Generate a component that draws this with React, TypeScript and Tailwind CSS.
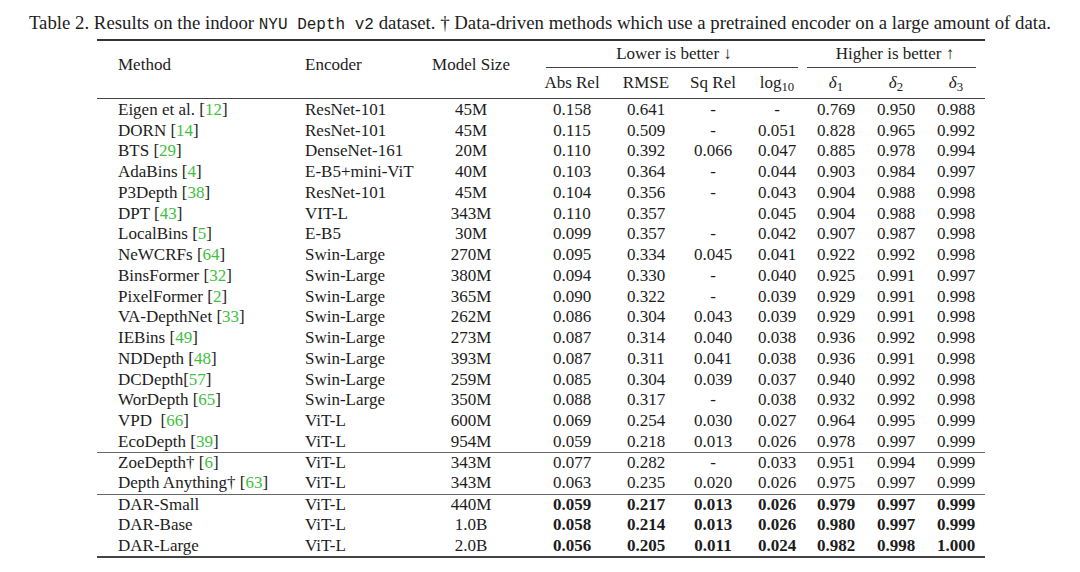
import React from "react";

type Row = {
  m: string;
  c?: string;
  enc: string;
  size: string;
  vals: string[];
  bold?: boolean;
};

const groups: Row[][] = [
  [
    { m: "Eigen et al. ", c: "12", enc: "ResNet-101", size: "45M", vals: ["0.158", "0.641", "-", "-", "0.769", "0.950", "0.988"] },
    { m: "DORN ", c: "14", enc: "ResNet-101", size: "45M", vals: ["0.115", "0.509", "-", "0.051", "0.828", "0.965", "0.992"] },
    { m: "BTS ", c: "29", enc: "DenseNet-161", size: "20M", vals: ["0.110", "0.392", "0.066", "0.047", "0.885", "0.978", "0.994"] },
    { m: "AdaBins ", c: "4", enc: "E-B5+mini-ViT", size: "40M", vals: ["0.103", "0.364", "-", "0.044", "0.903", "0.984", "0.997"] },
    { m: "P3Depth ", c: "38", enc: "ResNet-101", size: "45M", vals: ["0.104", "0.356", "-", "0.043", "0.904", "0.988", "0.998"] },
    { m: "DPT ", c: "43", enc: "VIT-L", size: "343M", vals: ["0.110", "0.357", "", "0.045", "0.904", "0.988", "0.998"] },
    { m: "LocalBins ", c: "5", enc: "E-B5", size: "30M", vals: ["0.099", "0.357", "-", "0.042", "0.907", "0.987", "0.998"] },
    { m: "NeWCRFs ", c: "64", enc: "Swin-Large", size: "270M", vals: ["0.095", "0.334", "0.045", "0.041", "0.922", "0.992", "0.998"] },
    { m: "BinsFormer ", c: "32", enc: "Swin-Large", size: "380M", vals: ["0.094", "0.330", "-", "0.040", "0.925", "0.991", "0.997"] },
    { m: "PixelFormer ", c: "2", enc: "Swin-Large", size: "365M", vals: ["0.090", "0.322", "-", "0.039", "0.929", "0.991", "0.998"] },
    { m: "VA-DepthNet ", c: "33", enc: "Swin-Large", size: "262M", vals: ["0.086", "0.304", "0.043", "0.039", "0.929", "0.991", "0.998"] },
    { m: "IEBins ", c: "49", enc: "Swin-Large", size: "273M", vals: ["0.087", "0.314", "0.040", "0.038", "0.936", "0.992", "0.998"] },
    { m: "NDDepth ", c: "48", enc: "Swin-Large", size: "393M", vals: ["0.087", "0.311", "0.041", "0.038", "0.936", "0.991", "0.998"] },
    { m: "DCDepth", c: "57", enc: "Swin-Large", size: "259M", vals: ["0.085", "0.304", "0.039", "0.037", "0.940", "0.992", "0.998"] },
    { m: "WorDepth ", c: "65", enc: "Swin-Large", size: "350M", vals: ["0.088", "0.317", "-", "0.038", "0.932", "0.992", "0.998"] },
    { m: "VPD\u00a0 ", c: "66", enc: "ViT-L", size: "600M", vals: ["0.069", "0.254", "0.030", "0.027", "0.964", "0.995", "0.999"] },
    { m: "EcoDepth ", c: "39", enc: "ViT-L", size: "954M", vals: ["0.059", "0.218", "0.013", "0.026", "0.978", "0.997", "0.999"] },
  ],
  [
    { m: "ZoeDepth† ", c: "6", enc: "ViT-L", size: "343M", vals: ["0.077", "0.282", "-", "0.033", "0.951", "0.994", "0.999"] },
    { m: "Depth Anything† ", c: "63", enc: "ViT-L", size: "343M", vals: ["0.063", "0.235", "0.020", "0.026", "0.975", "0.997", "0.999"] },
  ],
  [
    { m: "DAR-Small", enc: "ViT-L", size: "440M", bold: true, vals: ["0.059", "0.217", "0.013", "0.026", "0.979", "0.997", "0.999"] },
    { m: "DAR-Base", enc: "ViT-L", size: "1.0B", bold: true, vals: ["0.058", "0.214", "0.013", "0.026", "0.980", "0.997", "0.999"] },
    { m: "DAR-Large", enc: "ViT-L", size: "2.0B", bold: true, vals: ["0.056", "0.205", "0.011", "0.024", "0.982", "0.998", "1.000"] },
  ],
];

const cols = "grid grid-cols-[198px_147px_101px_74px_67px_64px_59px_60px_60px_58px]";

// centered 58px slot; content may overflow evenly on both sides
const Num = ({ children, bold }: { children: React.ReactNode; bold?: boolean }) => (
  <div className={`w-[58px] flex justify-center whitespace-nowrap ${bold ? "font-bold" : ""}`}>
    <span>{children}</span>
  </div>
);

const App = () => {
  return (
    <div className="w-[1080px] h-[572px] bg-white text-[#1c1c1c] font-['Liberation_Serif',serif] overflow-hidden">
      {/* Caption */}
      <p className="pt-[13px] pb-[4px] leading-[20px] text-[18.8px] text-center whitespace-nowrap">
        Table 2. Results on the indoor{" "}
        <span className="font-['Liberation_Mono',monospace] text-[16px]">NYU Depth v2</span> dataset. † Data-driven
        methods which use a pretrained encoder on a large amount of data.
      </p>

      <div className="ml-[97px] w-[888px] text-[17px]">
        <div className="h-[2px] bg-[#333]" />

        {/* Header */}
        <div className={`${cols} grid-rows-[27px_30px] leading-[20px]`}>
          <div className="col-start-1 row-start-1 row-span-2 flex items-center pl-[21px] pb-[10px]">Method</div>
          <div className="col-start-2 row-start-1 row-span-2 flex items-center pl-[10px] pb-[10px]">Encoder</div>
          <div className="col-start-3 row-start-1 row-span-2 flex items-center pb-[10px]">
            <Num>Model Size</Num>
          </div>
          <div className="col-start-4 col-span-4 row-start-1 ml-[3px] mr-[9px] flex items-center justify-center border-b border-[#444] pb-[1px] pl-[4px]">
            Lower is better ↓
          </div>
          <div className="col-start-8 col-span-3 row-start-1 mr-[9px] flex items-center justify-center border-b border-[#444] pb-[1px] pl-[7px]">
            Higher is better ↑
          </div>
          <div className="col-start-4 row-start-2 flex items-center">
            <Num>Abs Rel</Num>
          </div>
          <div className="col-start-5 row-start-2 flex items-center">
            <Num>RMSE</Num>
          </div>
          <div className="col-start-6 row-start-2 flex items-center">
            <Num>Sq Rel</Num>
          </div>
          <div className="col-start-7 row-start-2 flex items-center">
            <Num>
              log<sub>10</sub>
            </Num>
          </div>
          <div className="col-start-8 row-start-2 flex items-center">
            <Num>
              <i>δ</i>
              <sub>1</sub>
            </Num>
          </div>
          <div className="col-start-9 row-start-2 flex items-center">
            <Num>
              <i>δ</i>
              <sub>2</sub>
            </Num>
          </div>
          <div className="col-start-10 row-start-2 flex items-center">
            <Num>
              <i>δ</i>
              <sub>3</sub>
            </Num>
          </div>
        </div>

        <div className="h-px bg-[#444] mb-[0.5px]" />

        {/* Body */}
        {groups.map((g, gi) =>
          g.map((r, ri) => (
            <div
              key={r.m}
              className={`${cols} h-[20.75px] items-center leading-[20px] ${
                gi > 0 && ri === 0 ? "border-t-[1.5px] border-[#666]" : ""
              }`}
            >
              <div className="pl-[21px] whitespace-nowrap">
                {r.m}
                {r.c && (
                  <>
                    [<span className="text-[#40c040]">{r.c}</span>]
                  </>
                )}
              </div>
              <div className="pl-[10px] whitespace-nowrap">{r.enc}</div>
              <Num>{r.size}</Num>
              {r.vals.map((v, i) => (
                <Num key={i} bold={r.bold}>
                  {v}
                </Num>
              ))}
            </div>
          ))
        )}

        <div className="h-[2px] bg-[#444]" />
      </div>
    </div>
  );
};

export default App;
